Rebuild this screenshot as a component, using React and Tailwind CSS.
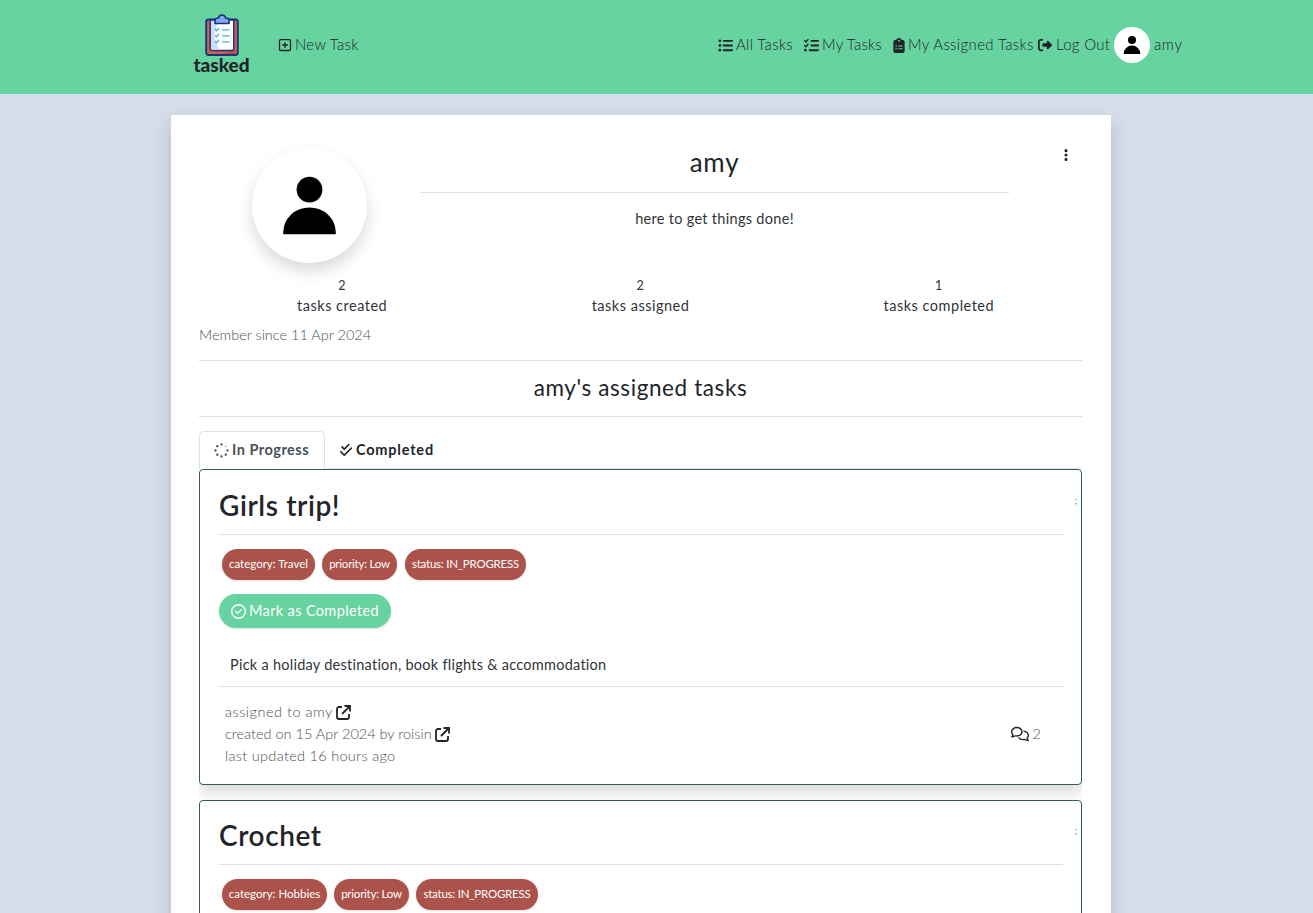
import React from "react";
import {
  FaRegSquarePlus,
  FaListUl,
  FaListCheck,
  FaClipboardList,
  FaRightFromBracket,
  FaEllipsisVertical,
  FaCheckDouble,
  FaRegCircleCheck,
  FaRegComments,
} from "react-icons/fa6";

function Person({ className }) {
  return (
    <svg viewBox="0 0 116 116" className={className}>
      <circle cx="58" cy="42" r="13" />
      <path d="M31.5 87 v-2 a26.5 25 0 0 1 53 0 v2 z" />
    </svg>
  );
}

function ExternalLink() {
  return (
    <svg width="15" height="15" viewBox="0 0 15 15" fill="none" stroke="#212529" strokeWidth="1.800" className="ml-[3px]">
      <path d="M6 2H3a2 2 0 0 0-2 2v8a2 2 0 0 0 2 2h8a2 2 0 0 0 2-2V9" />
      <path d="M8.500 1H14v5.500M14 1L6 9" />
    </svg>
  );
}

function Logo() {
  return (
    <div className="flex w-[57px] flex-col items-center">
      <svg width="34" height="43" viewBox="0 0 34 43">
        <rect x="1.2" y="5.5" width="31.6" height="35.5" rx="2.2" fill="#d75f4c" stroke="#15357d" strokeWidth="1.9" />
        <path d="M17 40h14.500V36z" fill="#b94f45" />
        <path d="M5.200 6h23.600v28.500a2 2 0 0 1-2 2H7.200a2 2 0 0 1-2-2z" fill="#fff" stroke="#15357d" strokeWidth="1.5" />
        <path d="M6 7h7L9 22l5 13.500H7.500a1.500 1.500 0 0 1-1.500-1.500z" fill="#cfdcfa" />
        <path d="M10 9.500V6q0-1.500 2-1.800h1.300q.7-3.200 3.700-3.200t3.700 3.200H22q2 .3 2 1.800v3.500z" fill="#86a8f2" stroke="#15357d" strokeWidth="1.600" strokeLinejoin="round" />
        <path d="M10 15.300l1.500 1.500 2.500-2.800M10 21.300l1.500 1.500 2.500-2.800M10 27.300l1.500 1.500 2.500-2.800M17 15.800h7.500M17 21.800h7.500M17 27.800h7.500" fill="none" stroke="#45b8c4" strokeWidth="1.300" />
      </svg>
      <span className="h-[18px] whitespace-nowrap text-[19px] font-black leading-[16px]">tasked</span>
    </div>
  );
}

function NavBar() {
  return (
    <header className="flex h-[94px] shrink-0 bg-[#67d3a0] pl-[193px] pr-[130px] text-[15px] font-light leading-[22px]">
      <div className="pt-[14px]"><Logo /></div>
      <a className="ml-[28px] flex h-[90px] items-center">
        <FaRegSquarePlus className="mr-[3px] size-[14px]" />
        <span className="w-[64px] whitespace-nowrap pb-[2px] tracking-[0.28px]">New Task</span>
      </a>
      <nav className="ml-auto flex h-[90px] items-center whitespace-nowrap">
        <FaListUl className="mr-[3px] size-[15px]" />
        <span className="w-[68px] pb-[2px] tracking-[0.33px]">All Tasks</span>
        <FaListCheck className="mr-[3px] size-[15px]" />
        <span className="w-[71px] pb-[2px] tracking-[0.2px]">My Tasks</span>
        <FaClipboardList className="mr-[3px] h-[15px] w-[12px]" />
        <span className="w-[130px] pb-[2px] tracking-[0.35px]">My Assigned Tasks</span>
        <FaRightFromBracket className="mr-[4px] size-[14px]" />
        <span className="w-[58px] pb-[2px] tracking-[0.3px]">Log Out</span>
        <span className="mr-[4px] size-[36px] rounded-full bg-white"><Person className="size-[36px]" /></span>
        <span className="w-[29px] pb-[2px] tracking-[0.6px]">amy</span>
      </nav>
    </header>
  );
}

function Stat({ value, label }) {
  return (
    <div className="flex-1 text-center text-[14.500px] leading-[20.500px] tracking-[0.5px]">
      <div className="pt-px text-[12.500px] leading-[19.500px]">{value}</div>
      <div>{label}</div>
    </div>
  );
}

function Badge({ children, className }) {
  return (
    <span className={"flex h-[31px] items-center justify-center whitespace-nowrap rounded-full bg-[#ab524a] pb-[2px] text-[11.500px] text-white shadow-sm " + className}>
      {children}
    </span>
  );
}

function TaskHead({ title, category, wide }) {
  return (
    <>
      <div className={"flex items-center justify-between border-b border-[#dfe0e1] pt-[5px] " + (wide ? "h-[64px]" : "h-[65px]")}>
        <h3 className="text-[28px] font-semibold leading-[34px] tracking-[0.6px]">{title}</h3>
        <span className="-mr-[14px] pb-[10px] text-[10px] font-light leading-[14px]">;</span>
      </div>
      <div className="ml-[3px] mt-[14px] flex">
        <Badge className={wide ? "mr-[7px] w-[105px]" : "mr-[7px] w-[93px]"}>category: {category}</Badge>
        <Badge className={"w-[75px] tracking-[-0.23px] " + (wide ? "mr-[7px]" : "mr-[8px]")}>priority: Low</Badge>
        <Badge className={"tracking-[-0.22px] " + (wide ? "w-[122px]" : "w-[121px]")}>status: IN_PROGRESS</Badge>
      </div>
    </>
  );
}

function Spinner() {
  const dots = Array.from({ length: 8 }, (_, i) => {
    const a = (i * Math.PI) / 4 - Math.PI / 2;
    return [7.5 + 6 * Math.cos(a), 7.5 + 6 * Math.sin(a)];
  });
  return (
    <svg width="15" height="15" viewBox="0 0 15 15" fill="currentColor">
      {dots.map(([x, y], i) => <circle key={i} cx={x} cy={y} r={i === 1 ? 0.6 : 1.15} />)}
    </svg>
  );
}

export default function App() {
  return (
    <div className="flex h-[913px] w-[1313px] flex-col overflow-hidden bg-[#d6dde9] font-['Lato','Open_Sans',sans-serif] text-[#212529]">
      <NavBar />
      <main className="ml-[171px] mt-[21px] flex h-[900px] w-[940px] shrink-0 flex-col bg-white pl-[28px] pr-[29px] shadow-[0_8px_16px_rgba(40,50,90,0.2)]">
        <section className="flex h-[160px] shrink-0">
          <div className="ml-[53px] mt-[33px] size-[115px] rounded-full bg-white shadow-[0_8px_16px_rgba(0,0,0,0.15)]">
            <Person className="size-[115px]" />
          </div>
          <div className="ml-[53px] w-[589px] text-center">
            <h1 className="h-[78px] border-b border-[#dfe0e1] pt-[32px] text-[26px] leading-[31px] tracking-[0.7px]">amy</h1>
            <p className="mt-[15px] text-[14.500px] leading-[22px] tracking-[0.3px] text-[#303438]">here to get things done!</p>
          </div>
          <FaEllipsisVertical className="ml-[50px] mt-[33px] size-[14px]" />
        </section>
        <section className="-mx-[6px] flex h-[49px] shrink-0 text-[#303438]">
          <Stat value="2" label="tasks created" />
          <Stat value="2" label="tasks assigned" />
          <Stat value="1" label="tasks completed" />
        </section>
        <p className="h-[36px] shrink-0 text-[14.500px] font-light leading-[22px] text-[#4c5054]">Member since 11 Apr 2024</p>
        <h2 className="flex h-[57px] shrink-0 items-center justify-center border-y border-[#dfe0e1] pb-[2px] text-[22.500px] tracking-[0.6px]">amy's assigned tasks</h2>
        <div className="mt-[14px] flex h-[38px] shrink-0 border-b border-[#dee2e6] text-[14.500px] font-bold">
          <div className="-mb-px flex w-[126px] items-center rounded-t-[5px] border border-b-0 border-[#dee2e6] bg-white pb-px pl-[14px] text-[#495057]">
            <Spinner /><span className="ml-[3px] whitespace-nowrap tracking-[0.5px]">In Progress</span>
          </div>
          <div className="flex items-center pl-[14px]">
            <FaCheckDouble className="mr-[3px] size-[14px]" /><span className="tracking-[0.8px]">Completed</span>
          </div>
        </div>
        <div className="flex flex-1 flex-col overflow-hidden">
          <article className="h-[316px] shrink-0 rounded-[4px] border border-[#315e51] bg-white pl-[19px] pr-[18px] shadow-[0_8px_16px_rgba(0,0,0,0.15)]">
            <TaskHead title="Girls trip!" category="Travel" />
            <button className="mt-[14px] flex h-[34px] w-[172px] items-center whitespace-nowrap rounded-full bg-[#67d3a0] pl-[12px] text-[14.500px] tracking-[0.36px] text-white shadow-sm">
              <FaRegCircleCheck className="mr-[3px] size-[15px]" />Mark as Completed
            </button>
            <p className="h-[59px] border-b border-[#dfe0e1] pl-[11px] pt-[26px] text-[14.500px] leading-[22px] tracking-[0.26px] text-[#303438]">Pick a holiday destination, book flights &amp; accommodation</p>
            <div className="flex items-center justify-between pl-[6px] pr-[22px] pt-[14px] text-[14.500px] font-light leading-[22px] text-[#4c5054]">
              <div>
                <div className="flex items-center"><span className="tracking-[0.5px]">assigned to amy</span><ExternalLink /></div>
                <div className="flex items-center">created on 15 Apr 2024 by roisin<ExternalLink /></div>
                <div className="tracking-[0.3px]">last updated 16 hours ago</div>
              </div>
              <div className="flex items-center"><FaRegComments className="mr-[4px] size-[18px] text-[#212529]" />2</div>
            </div>
          </article>
          <article className="mt-[15px] h-[316px] shrink-0 rounded-[4px] border border-[#315e51] bg-white pl-[19px] pr-[18px]">
            <TaskHead title="Crochet" category="Hobbies" wide />
          </article>
        </div>
      </main>
    </div>
  );
}
